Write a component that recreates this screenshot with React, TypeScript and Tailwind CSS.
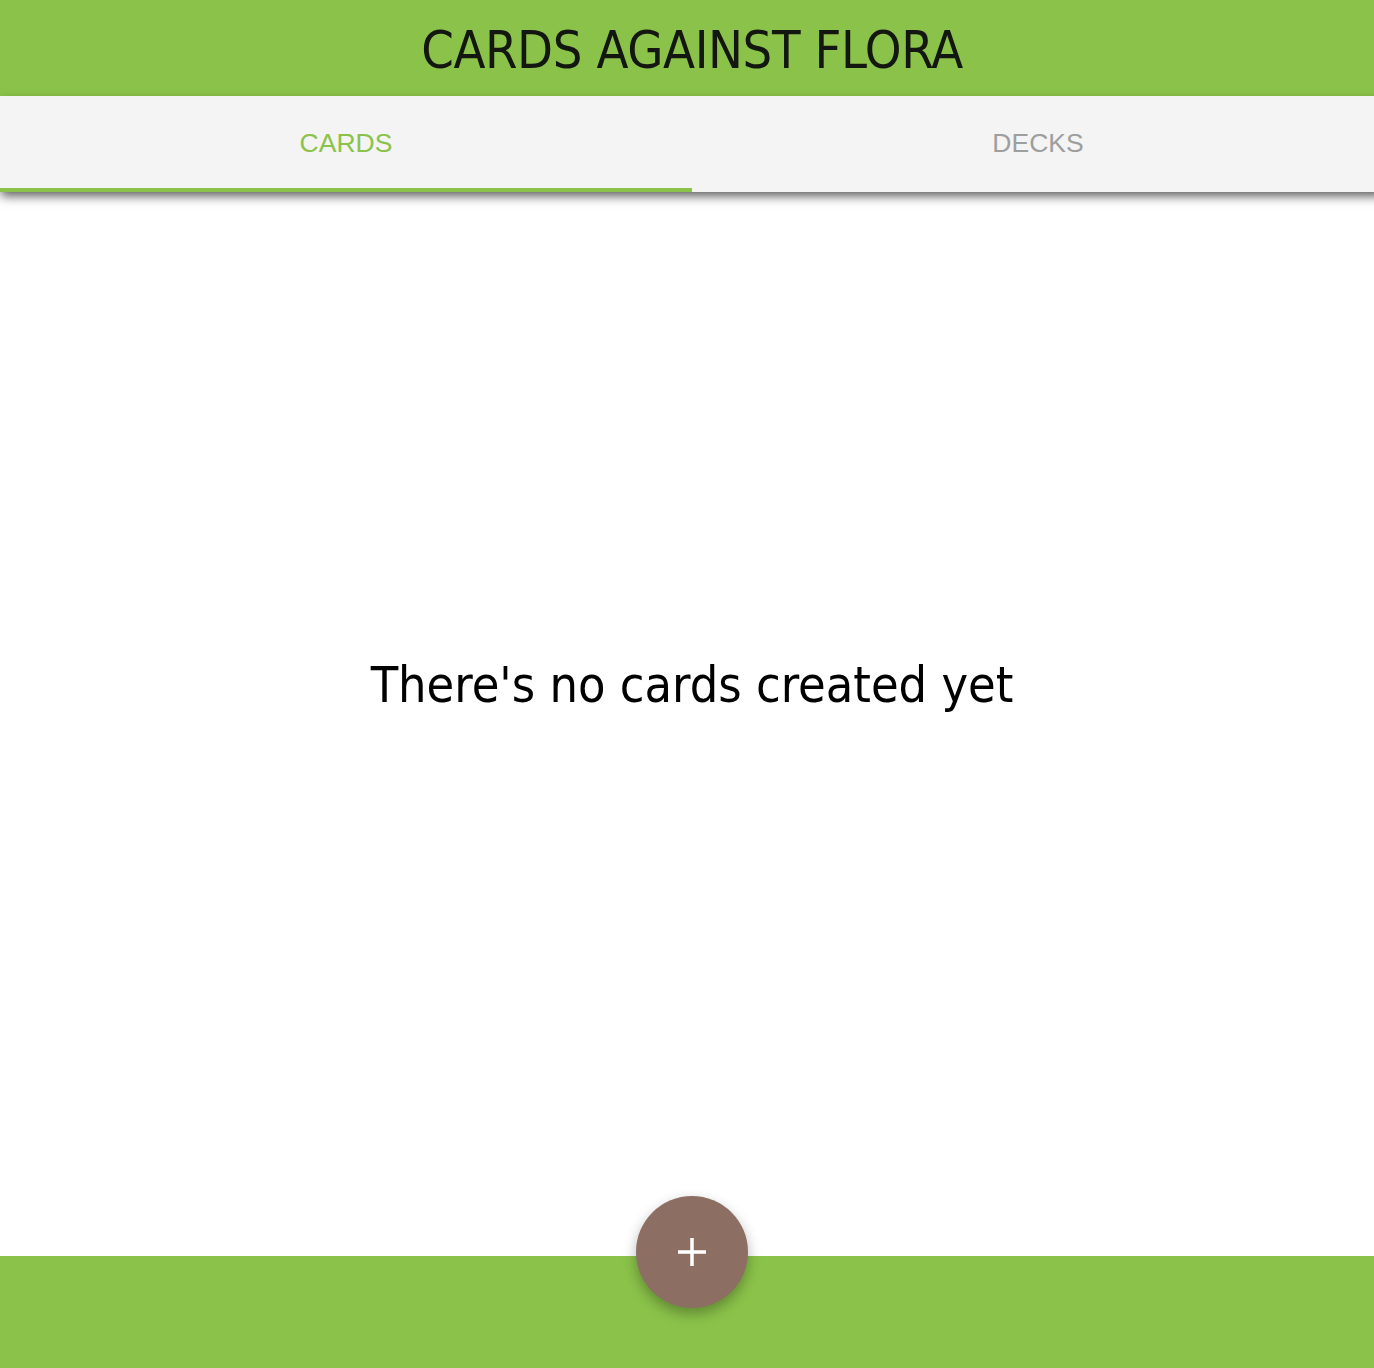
const App = () => {
  return (
    <div className="w-full overflow-hidden">
      <div className="flex flex-col h-[1368px] w-[1384px] bg-white">
        <header className="h-[96px] bg-[#8bc34a] flex items-center justify-center">
          <h1 className="text-[52px] leading-none text-[#14170f] font-['DejaVu_Sans_Condensed',sans-serif] tracking-[-0.4px] pt-1">
            CARDS AGAINST FLORA
          </h1>
        </header>
        <nav className="h-[96px] bg-[#f4f4f4] grid grid-cols-2 shadow-[0_5px_10px_-1px_rgba(0,0,0,0.65)] relative z-10">
          <button className="flex items-center justify-center pt-[3px] border-b-4 border-[#8bc34a] text-[#8bc34a] text-[26.5px] font-['Liberation_Sans',sans-serif]">
            CARDS
          </button>
          <button className="flex items-center justify-center pt-[3px] border-b-4 border-transparent text-[#9e9e9e] text-[26.5px] font-['Liberation_Sans',sans-serif]">
            DECKS
          </button>
        </nav>
        <main className="flex-1 flex items-center justify-center pb-[78px]">
          <p className="text-[50px] text-black font-['DejaVu_Sans_Condensed',sans-serif]">
            There's no cards created yet
          </p>
        </main>
        <footer className="h-[112px] bg-[#8bc34a] relative">
          <button className="absolute left-1/2 -top-[60px] -translate-x-1/2 w-[112px] h-[112px] rounded-full bg-[#8d6e63] flex items-center justify-center shadow-[0_6px_14px_rgba(0,0,0,0.3)]">
            <svg width="28" height="28" viewBox="0 0 28 28" fill="none">
              <path d="M14 0v28M0 14h28" stroke="white" strokeWidth="3.5" />
            </svg>
          </button>
        </footer>
      </div>
    </div>
  );
};

export default App;
